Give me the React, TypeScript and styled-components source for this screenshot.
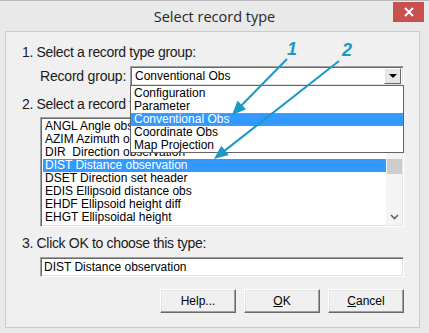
import React from 'react';
import styled, { createGlobalStyle } from 'styled-components';

const GlobalStyle = createGlobalStyle`
  html, body {
    margin: 0;
    padding: 0;
    background: #e9e9e9;
  }
  body {
    font-family: "Liberation Sans", Arial, sans-serif;
  }
`;

const ACCENT = '#1b98c4';

const Window = styled.div`
  position: relative;
  width: 429px;
  height: 333px;
  box-sizing: border-box;
  background: #e9e9e9;
  border-top: 1px solid #b8b8b8;
  display: flex;
  flex-direction: column;
  overflow: hidden;
`;

const TitleBar = styled.div`
  height: 30px;
  display: grid;
  grid-template-columns: 1fr auto 1fr;
  align-items: center;
`;

const Title = styled.div`
  grid-column: 2;
  font-family: "Open Sans", "Liberation Sans", sans-serif;
  font-size: 14.5px;
  color: #262626;
  padding-top: 1px;
`;

const CloseButton = styled.div`
  grid-column: 3;
  justify-self: end;
  align-self: start;
  margin: 1px 5px 0 0;
  width: 31px;
  height: 20px;
  background: #c75050;
  display: flex;
  align-items: center;
  justify-content: center;
`;

const Client = styled.div`
  flex: 1;
  margin: 0 9px 5px 5px;
  border: 1px solid #cbcbcb;
  background: #f0f0f0;
  padding: 0 15px 0 16px;
  display: flex;
  flex-direction: column;
`;

const StepLabel = styled.div<{ $top: number }>`
  margin-top: ${({ $top }) => $top}px;
  height: 16px;
  line-height: 16px;
  font-size: 14px;
  letter-spacing: -0.33px;
  color: #1a1a1a;
  white-space: nowrap;
`;

const GroupRow = styled.div`
  margin-top: 6px;
  height: 20px;
  display: flex;
  align-items: center;
`;

const FieldLabel = styled.span`
  margin-left: 18px;
  width: 90px;
  font-size: 14px;
  letter-spacing: -0.2px;
  color: #1a1a1a;
`;

const sunken = `
  box-sizing: border-box;
  background: #fff;
  border: 1px solid;
  border-color: #a0a0a0 #ffffff #ffffff #a0a0a0;
  box-shadow: inset 1px 1px 0 #696969, inset -1px -1px 0 #e3e3e3;
`;

const Combo = styled.div`
  ${sunken}
  position: relative;
  flex: 1;
  height: 20px;
  display: flex;
  align-items: center;
  padding: 0 2px 0 4px;
  font-size: 12px;
  color: #000;
`;

const ComboText = styled.span`
  flex: 1;
`;

const DropButton = styled.div`
  box-sizing: border-box;
  width: 17px;
  height: 16px;
  background: #e6e6e6;
  border: 1px solid;
  border-color: #ffffff #696969 #696969 #ffffff;
  display: flex;
  align-items: center;
  justify-content: center;
`;

const Triangle = styled.div`
  width: 0;
  height: 0;
  border-left: 4px solid transparent;
  border-right: 4px solid transparent;
  border-top: 4px solid #000;
`;

const DropList = styled.div`
  position: absolute;
  top: 100%;
  left: -1px;
  right: -1px;
  box-sizing: border-box;
  background: #fff;
  border: 1px solid #646464;
  padding-top: 1px;
  z-index: 2;
`;

const Option = styled.div<{ $selected?: boolean }>`
  height: 13px;
  line-height: 13px;
  padding-left: 3px;
  font-size: 12px;
  color: ${({ $selected }) => ($selected ? '#fff' : '#000')};
  background: ${({ $selected }) => ($selected ? '#3399ff' : 'transparent')};
  outline: ${({ $selected }) => ($selected ? '1px dotted #d9822b' : 'none')};
  outline-offset: -1px;
`;

const ListBox = styled.div`
  ${sunken}
  margin: 5px 0 0 18px;
  height: 110px;
  display: flex;
  padding: 2px 1px 1px 2px;
`;

const Items = styled.div`
  flex: 1;
`;

const Item = styled.div<{ $selected?: boolean }>`
  height: 13px;
  line-height: 13px;
  padding-left: 2px;
  font-size: 12px;
  white-space: pre;
  color: ${({ $selected }) => ($selected ? '#fff' : '#000')};
  background: ${({ $selected }) => ($selected ? '#3399ff' : 'transparent')};
`;

const ScrollBar = styled.div`
  width: 16px;
  background: #f4f4f4;
  display: flex;
  flex-direction: column;
  align-items: center;
`;

const Thumb = styled.div`
  margin-top: 39px;
  width: 15px;
  height: 15px;
  background: #cdcdcd;
`;

const ScrollArrow = styled.div`
  margin-top: auto;
  height: 16px;
  display: flex;
  align-items: center;
`;

const TextField = styled.div`
  ${sunken}
  margin: 6px 0 0 18px;
  height: 20px;
  line-height: 18px;
  padding-left: 3px;
  font-size: 12px;
  color: #000;
`;

const ButtonRow = styled.div`
  margin-top: 12px;
  display: flex;
  justify-content: flex-end;
  gap: 8px;
`;

const DialogButton = styled.button`
  box-sizing: border-box;
  width: 76px;
  height: 24px;
  background: #f0f0f0;
  border: 1px solid;
  border-color: #ffffff #696969 #696969 #ffffff;
  box-shadow: inset -1px -1px 0 #a0a0a0, inset 1px 1px 0 #e3e3e3;
  font-family: "Liberation Sans", Arial, sans-serif;
  font-size: 12px;
  color: #000;
  padding: 0;
`;

const Mnemonic = styled.span`
  text-decoration: underline;
`;

const Callout = styled.span<{ $x: number; $y: number }>`
  position: absolute;
  left: ${({ $x }) => $x}px;
  top: ${({ $y }) => $y}px;
  font-family: "Liberation Sans", Arial, sans-serif;
  font-weight: bold;
  font-style: italic;
  font-size: 18px;
  line-height: 18px;
  color: ${ACCENT};
  z-index: 3;
`;

const Overlay = styled.svg`
  position: absolute;
  left: 0;
  top: 0;
  pointer-events: none;
  z-index: 3;
`;

const groups = ['Configuration', 'Parameter', 'Conventional Obs', 'Coordinate Obs', 'Map Projection'];

const recordTypes = [
  'ANGL Angle observation',
  'AZIM Azimuth observation',
  'DIR  Direction observation',
  'DIST Distance observation',
  'DSET Direction set header',
  'EDIS Ellipsoid distance obs',
  'EHDF Ellipsoid height diff',
  'EHGT Ellipsoidal height',
];

function Arrow({ x1, y1, x2, y2 }: { x1: number; y1: number; x2: number; y2: number }) {
  const len = Math.hypot(x2 - x1, y2 - y1);
  const ux = (x2 - x1) / len;
  const uy = (y2 - y1) / len;
  const head = 14;
  const half = 6;
  const bx = x2 - ux * head;
  const by = y2 - uy * head;
  const pts = `${x2},${y2} ${bx - uy * half},${by + ux * half} ${bx + uy * half},${by - ux * half}`;
  return (
    <g>
      <line x1={x1} y1={y1} x2={bx + ux * 2} y2={by + uy * 2} stroke={ACCENT} strokeWidth={2} />
      <polygon points={pts} fill={ACCENT} />
    </g>
  );
}

export default function App() {
  return (
    <>
      <GlobalStyle />
      <Window>
        <TitleBar>
          <Title>Select record type</Title>
          <CloseButton>
            <svg width="10" height="10" viewBox="0 0 10 10">
              <path d="M1 1 L9 9 M9 1 L1 9" stroke="#fff" strokeWidth="1.8" />
            </svg>
          </CloseButton>
        </TitleBar>
        <Client>
          <StepLabel $top={12}>1. Select a record type group:</StepLabel>
          <GroupRow>
            <FieldLabel>Record group:</FieldLabel>
            <Combo>
              <ComboText>Conventional Obs</ComboText>
              <DropButton>
                <Triangle />
              </DropButton>
              <DropList>
                {groups.map(g => (
                  <Option key={g} $selected={g === 'Conventional Obs'}>
                    {g}
                  </Option>
                ))}
              </DropList>
            </Combo>
          </GroupRow>
          <StepLabel $top={10}>2. Select a record type:</StepLabel>
          <ListBox>
            <Items>
              {recordTypes.map(r => (
                <Item key={r} $selected={r.startsWith('DIST')}>
                  {r}
                </Item>
              ))}
            </Items>
            <ScrollBar>
              <Thumb />
              <ScrollArrow>
                <svg width="9" height="6" viewBox="0 0 9 6">
                  <path d="M1 1 L4.5 4.5 L8 1" stroke="#606060" strokeWidth="1.6" fill="none" />
                </svg>
              </ScrollArrow>
            </ScrollBar>
          </ListBox>
          <StepLabel $top={8}>3. Click OK to choose this type:</StepLabel>
          <TextField>DIST Distance observation</TextField>
          <ButtonRow>
            <DialogButton>Help...</DialogButton>
            <DialogButton>
              <Mnemonic>O</Mnemonic>K
            </DialogButton>
            <DialogButton>
              <Mnemonic>C</Mnemonic>ancel
            </DialogButton>
          </ButtonRow>
        </Client>
        <Callout $x={287} $y={39}>1</Callout>
        <Callout $x={342} $y={40}>2</Callout>
        <Overlay width={429} height={333}>
          <Arrow x1={287} y1={58} x2={232} y2={114} />
          <Arrow x1={339} y1={60} x2={214} y2={158} />
        </Overlay>
      </Window>
    </>
  );
}
